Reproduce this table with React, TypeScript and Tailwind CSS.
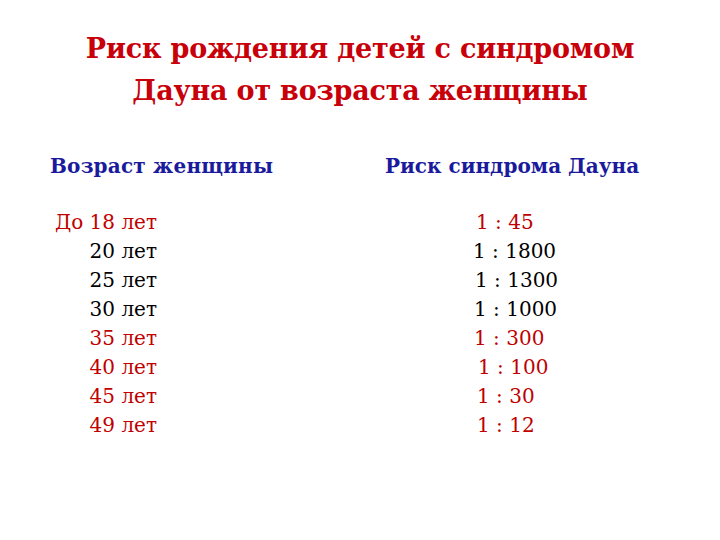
import React from "react";

const ages: [string, boolean][] = [
  ["До 18 лет", true],
  ["20 лет", false],
  ["25 лет", false],
  ["30 лет", false],
  ["35 лет", true],
  ["40 лет", true],
  ["45 лет", true],
  ["49 лет", true],
];

const risks: [string, boolean, string][] = [
  ["1 : 45", true, "pl-[3px]"],
  ["1 : 1800", false, "pl-0"],
  ["1 : 1300", false, "pl-[2px]"],
  ["1 : 1000", false, "pl-[1px]"],
  ["1 : 300", true, "pl-[1px]"],
  ["1 : 100", true, "pl-[5px]"],
  ["1 : 30", true, "pl-[4px]"],
  ["1 : 12", true, "pl-[4px]"],
];

export default function App() {
  return (
    <div className="w-[720px] h-[540px] bg-white overflow-hidden font-['DejaVu_Serif',serif] [font-variant-numeric:oldstyle-nums]">
      <div className="pt-[28px] text-center text-[#c8000a] font-bold text-[27px] leading-[42px] tracking-[-0.2px]">
        <div>Риск рождения детей с синдромом</div>
        <div>Дауна от возраста женщины</div>
      </div>
      <div className="flex mt-[39px]">
        <div className="w-[335px] pl-[50px]">
          <div className="text-[#1a1a9c] font-bold text-[20px] leading-[30px] tracking-[0.2px]">Возраст женщины</div>
          <div className="mt-[27px] w-[107px] flex flex-col items-end text-[20px] leading-[29px]">
            {ages.map(([t, red]) => (
              <div key={t} className={red ? "text-[#c00000]" : "text-black"}>{t}</div>
            ))}
          </div>
        </div>
        <div className="flex-1 pl-[50px]">
          <div className="text-[#1a1a9c] font-bold text-[20px] leading-[30px]">Риск синдрома Дауна</div>
          <div className="mt-[27px] ml-[88px] flex flex-col text-[20px] leading-[29px]">
            {risks.map(([t, red, pl]) => (
              <div key={t} className={(red ? "text-[#c00000] " : "text-black ") + pl}>{t}</div>
            ))}
          </div>
        </div>
      </div>
    </div>
  );
}
